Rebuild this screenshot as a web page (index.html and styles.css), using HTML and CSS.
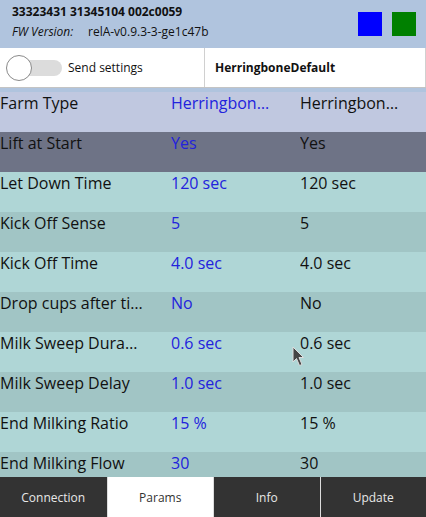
FILE: index.html
```html
<!DOCTYPE html>
<html lang="en">
<head>
    <meta charset="UTF-8">
    <meta name="viewport" content="width=device-width, initial-scale=1.0">
    <title>Params</title>
    <link rel="stylesheet" href="styles.css">
</head>
<body>
    <div class="app">
        <div class="header">
            <div class="ids">
                <div class="serial">33323431 31345104 002c0059</div>
                <div class="fw"><span class="fw-label">FW Version:</span><span>relA-v0.9.3-3-ge1c47b</span></div>
            </div>
            <div class="leds">
                <span class="led blue"></span>
                <span class="led green"></span>
            </div>
        </div>

        <div class="settings">
            <div class="send">
                <span class="toggle"><span class="knob"></span></span>
                <span>Send settings</span>
            </div>
            <div class="profile">HerringboneDefault</div>
        </div>

        <div class="params">
            <div class="row head">
                <div class="cell">Farm Type</div>
                <div class="cell val">HerringboneDefault</div>
                <div class="cell">HerringboneDefault</div>
            </div>
            <div class="row selected">
                <div class="cell">Lift at Start</div>
                <div class="cell val">Yes</div>
                <div class="cell">Yes</div>
            </div>
            <div class="row">
                <div class="cell">Let Down Time</div>
                <div class="cell val">120 sec</div>
                <div class="cell">120 sec</div>
            </div>
            <div class="row alt">
                <div class="cell">Kick Off Sense</div>
                <div class="cell val">5</div>
                <div class="cell">5</div>
            </div>
            <div class="row">
                <div class="cell">Kick Off Time</div>
                <div class="cell val">4.0 sec</div>
                <div class="cell">4.0 sec</div>
            </div>
            <div class="row alt">
                <div class="cell">Drop cups after timeout</div>
                <div class="cell val">No</div>
                <div class="cell">No</div>
            </div>
            <div class="row">
                <div class="cell">Milk Sweep Duration</div>
                <div class="cell val">0.6 sec</div>
                <div class="cell">0.6 sec</div>
            </div>
            <div class="row alt">
                <div class="cell">Milk Sweep Delay</div>
                <div class="cell val">1.0 sec</div>
                <div class="cell">1.0 sec</div>
            </div>
            <div class="row">
                <div class="cell">End Milking Ratio</div>
                <div class="cell val">15 %</div>
                <div class="cell">15 %</div>
            </div>
            <div class="row alt">
                <div class="cell">End Milking Flow</div>
                <div class="cell val">30</div>
                <div class="cell">30</div>
            </div>
        </div>

        <div class="tabs">
            <div class="tab">Connection</div>
            <div class="tab active">Params</div>
            <div class="tab">Info</div>
            <div class="tab">Update</div>
        </div>

        <svg class="cursor" width="13" height="21" viewBox="0 0 13 21">
            <path d="M1 1 L1 16 L4.5 12.5 L7.5 19.5 L10 18.5 L7 11.5 L11.5 11.5 Z" fill="#444" stroke="#ddd" stroke-width="1"/>
        </svg>
    </div>
</body>
</html>
```

FILE: styles.css
```css
body {
    margin: 0;
    font-family: 'Open Sans', sans-serif;
    background-color: #b0c4de;
    color: #111;
}
.app {
    position: relative;
    display: flex;
    flex-direction: column;
    height: 100vh;
    overflow: hidden;
}
.header {
    display: flex;
    justify-content: space-between;
    align-items: flex-start;
    height: 48px;
    padding: 0 10px 0 12px;
    font-size: 12px;
}
.serial {
    font-weight: bold;
    margin-top: 4px;
    line-height: 16px;
}
.fw {
    margin-top: 4px;
    line-height: 16px;
}
.fw-label {
    display: inline-block;
    width: 76px;
    font-style: italic;
}
.leds {
    display: flex;
    gap: 10px;
    margin-top: 12px;
}
.led {
    width: 24px;
    height: 24px;
}
.blue {
    background-color: #0000ff;
}
.green {
    background-color: #008000;
}
.settings {
    display: grid;
    grid-template-columns: 205px 1fr;
    height: 39px;
    background: #fff;
    border-bottom: 1px solid #c4c4c4;
    margin-bottom: 4px;
    font-size: 12px;
}
.send {
    display: flex;
    align-items: center;
    gap: 6px;
    padding-left: 6px;
    border-right: 1px solid #d0d0d0;
}
.toggle {
    position: relative;
    width: 56px;
    height: 26px;
    flex-shrink: 0;
}
.toggle::before {
    content: "";
    position: absolute;
    left: 12px;
    right: 0;
    top: 5px;
    height: 16px;
    border-radius: 8px;
    background: #dcdcdc;
}
.knob {
    position: absolute;
    left: 0;
    top: 0;
    width: 24px;
    height: 24px;
    border-radius: 50%;
    background: #fff;
    border: 1px solid #8a8a8a;
}
.profile {
    display: flex;
    align-items: center;
    padding-left: 10px;
    font-weight: bold;
    border-right: 1px solid #d0d0d0;
}
.params {
    flex: 1;
    overflow: hidden;
}
.row {
    display: grid;
    grid-template-columns: 171px 129px 1fr;
    height: 40px;
    font-size: 16px;
    line-height: 21px;
    background: #afd6d6;
}
.row.alt {
    background: #a1c5c5;
}
.row.head {
    background: #c0c8e0;
}
.row.selected {
    background: #6e7386;
}
.cell {
    padding: 1px 28px 0 0;
    white-space: nowrap;
    overflow: hidden;
    text-overflow: ellipsis;
}
.cell:last-child {
    padding-right: 24px;
}
.val {
    color: #2222dd;
}
.tabs {
    display: grid;
    grid-template-columns: repeat(4, 1fr);
    height: 40px;
    background: #333;
    font-size: 12px;
}
.tab {
    display: flex;
    align-items: center;
    justify-content: center;
    color: #e8e8e8;
    border-left: 1px solid #ddd;
}
.tab:first-child {
    border-left: none;
}
.tab.active {
    background: #fff;
    color: #333;
}
.cursor {
    position: absolute;
    left: 292px;
    top: 346px;
}
```
